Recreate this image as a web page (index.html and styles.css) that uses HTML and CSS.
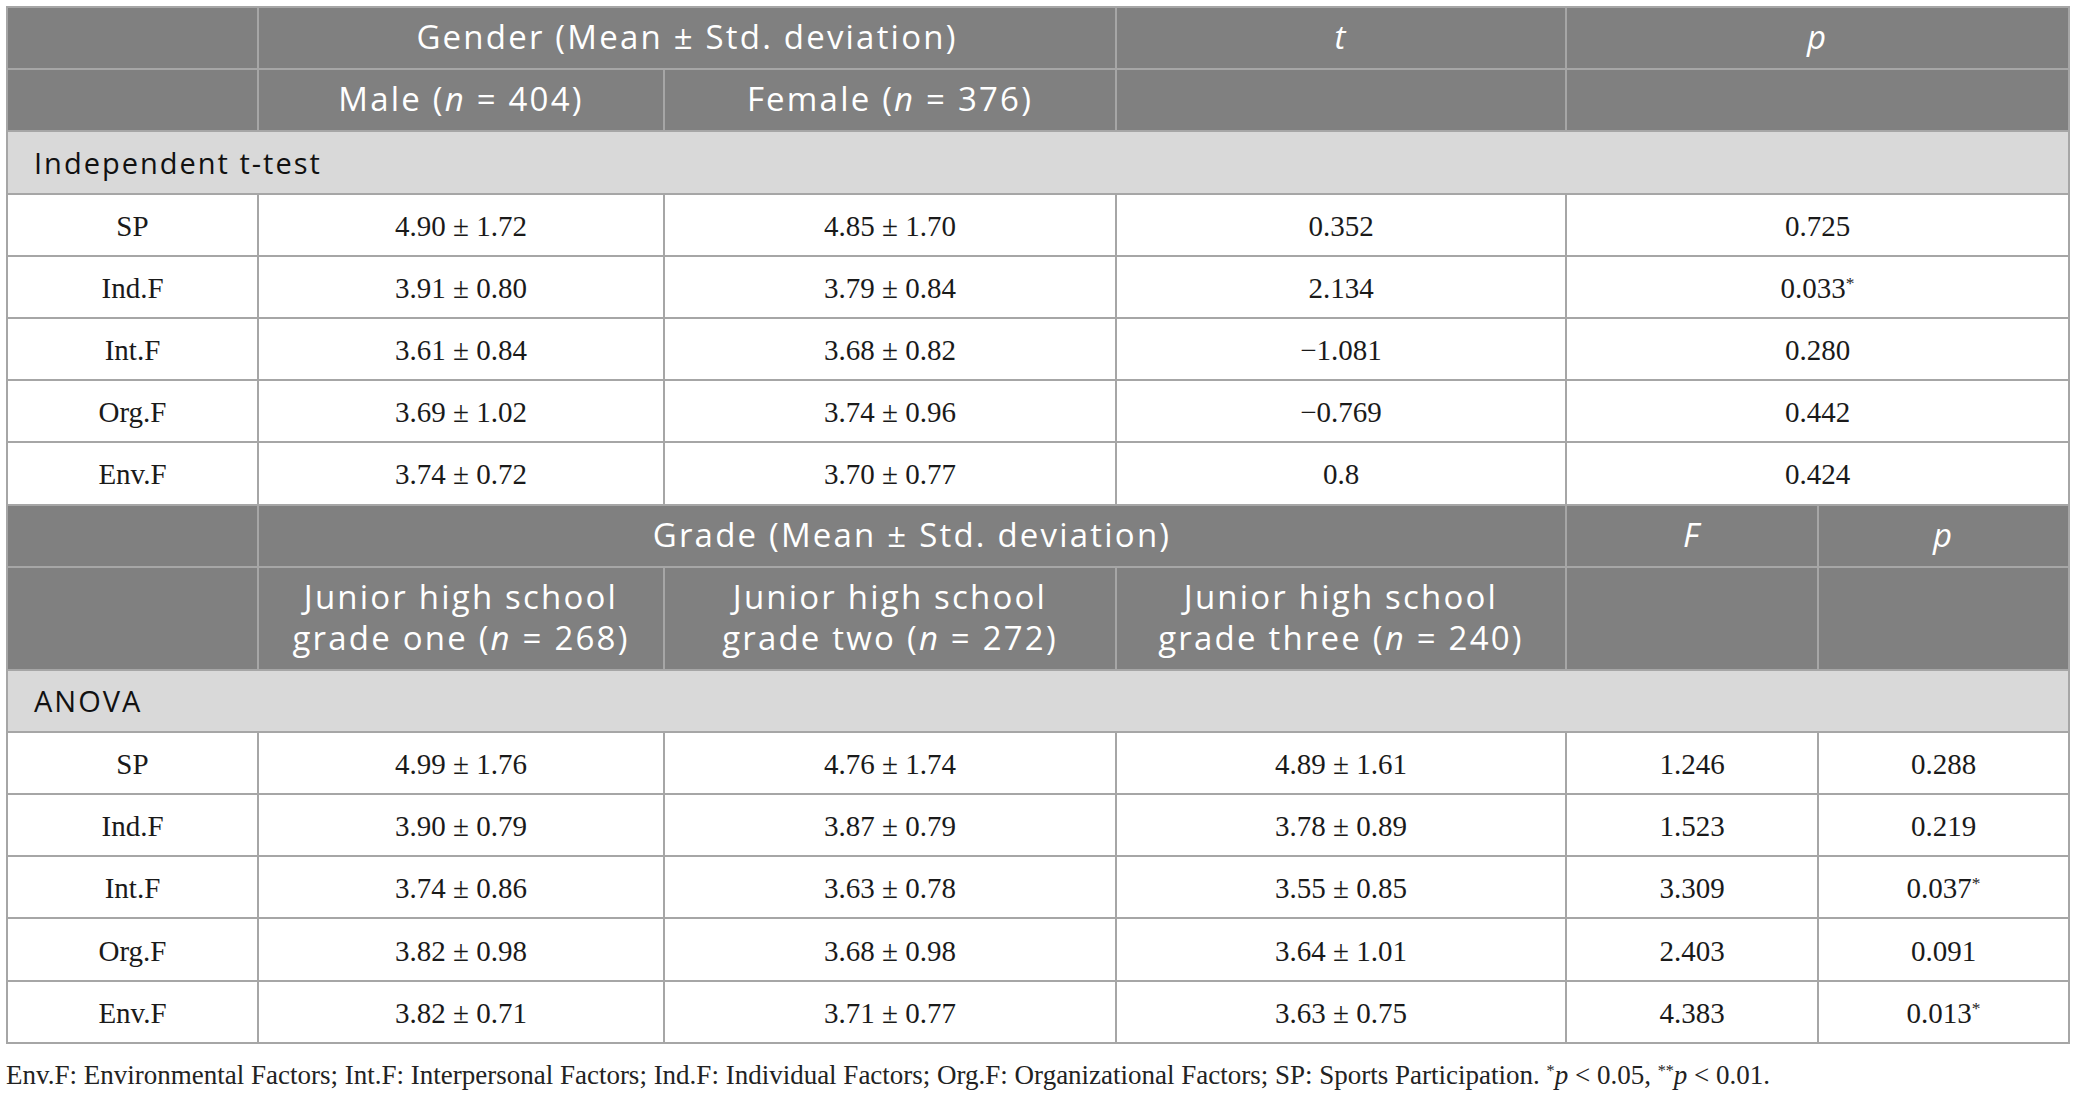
FILE: index.html
```html
<!DOCTYPE html>
<html>
<head>
<meta charset="utf-8">
<link rel="stylesheet" href="styles.css">
</head>
<body>
<div class="page">
<table class="data">
<colgroup>
<col class="c1"><col class="c2"><col class="c3"><col class="c4"><col class="c5"><col class="c6">
</colgroup>
<tbody>
<tr class="hd">
<td></td>
<td colspan="2">Gender (Mean ± Std. deviation)</td>
<td><i>t</i></td>
<td colspan="2"><i>p</i></td>
</tr>
<tr class="hd">
<td></td>
<td>Male (<i>n</i> = 404)</td>
<td>Female (<i>n</i> = 376)</td>
<td></td>
<td colspan="2"></td>
</tr>
<tr class="sec"><td colspan="6">Independent t-test</td></tr>
<tr class="row"><td>SP</td><td>4.90 ± 1.72</td><td>4.85 ± 1.70</td><td>0.352</td><td colspan="2">0.725</td></tr>
<tr class="row"><td>Ind.F</td><td>3.91 ± 0.80</td><td>3.79 ± 0.84</td><td>2.134</td><td colspan="2">0.033<sup>*</sup></td></tr>
<tr class="row"><td>Int.F</td><td>3.61 ± 0.84</td><td>3.68 ± 0.82</td><td>−1.081</td><td colspan="2">0.280</td></tr>
<tr class="row"><td>Org.F</td><td>3.69 ± 1.02</td><td>3.74 ± 0.96</td><td>−0.769</td><td colspan="2">0.442</td></tr>
<tr class="row"><td>Env.F</td><td>3.74 ± 0.72</td><td>3.70 ± 0.77</td><td>0.8</td><td colspan="2">0.424</td></tr>
<tr class="hd">
<td></td>
<td colspan="3">Grade (Mean ± Std. deviation)</td>
<td><i>F</i></td>
<td><i>p</i></td>
</tr>
<tr class="hd two">
<td></td>
<td>Junior high school<br>grade one (<i>n</i> = 268)</td>
<td>Junior high school<br>grade two (<i>n</i> = 272)</td>
<td>Junior high school<br>grade three (<i>n</i> = 240)</td>
<td></td>
<td></td>
</tr>
<tr class="sec"><td colspan="6">ANOVA</td></tr>
<tr class="row"><td>SP</td><td>4.99 ± 1.76</td><td>4.76 ± 1.74</td><td>4.89 ± 1.61</td><td>1.246</td><td>0.288</td></tr>
<tr class="row"><td>Ind.F</td><td>3.90 ± 0.79</td><td>3.87 ± 0.79</td><td>3.78 ± 0.89</td><td>1.523</td><td>0.219</td></tr>
<tr class="row"><td>Int.F</td><td>3.74 ± 0.86</td><td>3.63 ± 0.78</td><td>3.55 ± 0.85</td><td>3.309</td><td>0.037<sup>*</sup></td></tr>
<tr class="row"><td>Org.F</td><td>3.82 ± 0.98</td><td>3.68 ± 0.98</td><td>3.64 ± 1.01</td><td>2.403</td><td>0.091</td></tr>
<tr class="row"><td>Env.F</td><td>3.82 ± 0.71</td><td>3.71 ± 0.77</td><td>3.63 ± 0.75</td><td>4.383</td><td>0.013<sup>*</sup></td></tr>
</tbody>
</table>
<p class="note">Env.F: Environmental Factors; Int.F: Interpersonal Factors; Ind.F: Individual Factors; Org.F: Organizational Factors; SP: Sports Participation. <sup>*</sup><i>p</i> &lt; 0.05, <sup>**</sup><i>p</i> &lt; 0.01.</p>
</div>
</body>
</html>
```
FILE: styles.css
```css
html, body {
  margin: 0;
  padding: 0;
  background: #ffffff;
}
.page {
  padding: 6px 0 0 6px;
}
.data {
  border-collapse: collapse;
  table-layout: fixed;
  width: 2062px;
  border: 2px solid #a6a6a6;
}
.c1 { width: 251px; }
.c2 { width: 406px; }
.c3 { width: 452px; }
.c4 { width: 450px; }
.c5 { width: 252px; }
.c6 { width: 251px; }
.data td {
  border: 2px solid #a6a6a6;
  padding: 0 6px;
  text-align: center;
  vertical-align: middle;
  box-sizing: border-box;
}
.hd td {
  background: #808080;
  color: #ffffff;
  font-family: "Open Sans", Lato, sans-serif;
  font-size: 33px;
  letter-spacing: 2.2px;
  height: 62.2px;
  line-height: 45px;
  padding-bottom: 3px;
}
.hd.two td {
  height: 103px;
  line-height: 41px;
  padding-bottom: 2px;
}
.sec td {
  background: #d9d9d9;
  color: #111111;
  font-family: "Open Sans", Lato, sans-serif;
  font-size: 29px;
  letter-spacing: 2px;
  text-align: left;
  padding-left: 26px;
  height: 62.2px;
}
.row td {
  font-family: "Liberation Serif", serif;
  font-size: 29px;
  color: #1a1a1a;
  height: 62.2px;
  padding-top: 3px;
}
sup {
  font-size: 0.6em;
  vertical-align: 0.5em;
  line-height: 0;
}
.note {
  margin: 16px 0 0 0;
  font-family: "Liberation Serif", serif;
  font-size: 27px;
  color: #222222;
}
```
